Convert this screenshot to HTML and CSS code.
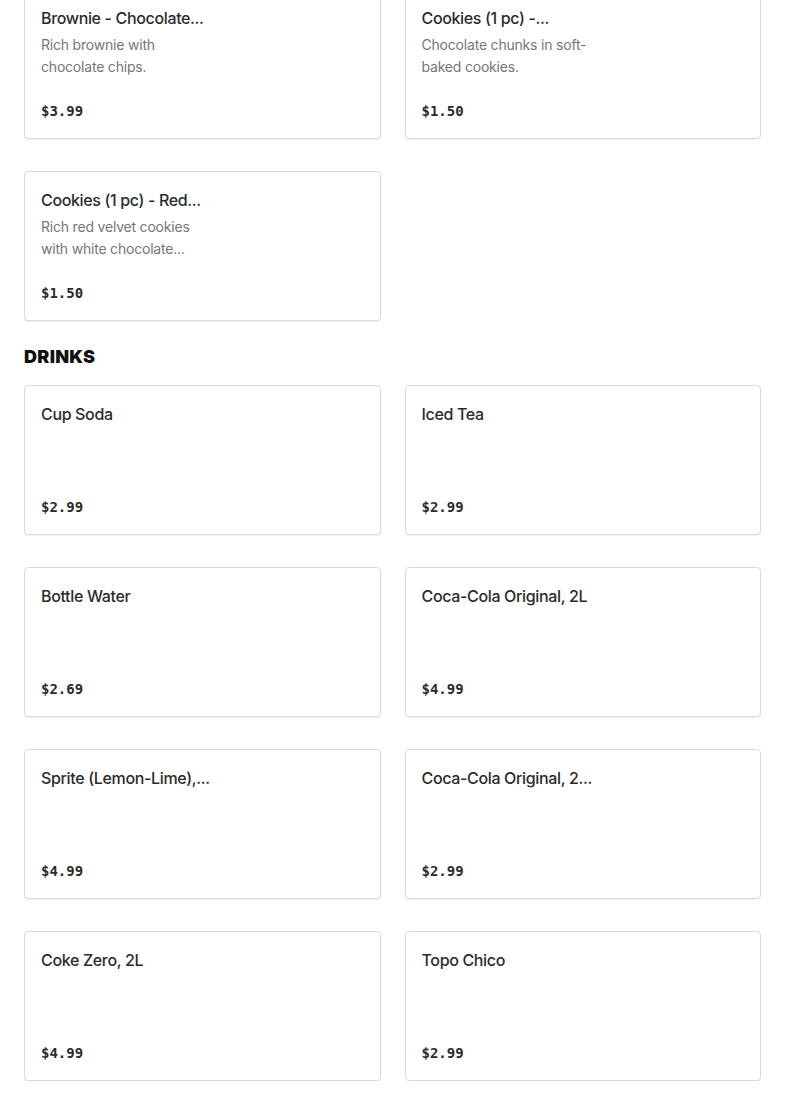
FILE: index.html
```html
<!DOCTYPE html>
<html lang="en">
<head>
<meta charset="utf-8">
<title>Menu</title>
<link rel="stylesheet" href="styles.css">
</head>
<body>
<main class="menu">
  <section class="section">
    <div class="grid">
      <article class="card">
        <div class="info">
          <h3 class="name">Brownie - Chocolate...</h3>
          <p class="desc">Rich brownie with chocolate chips.</p>
        </div>
        <div class="price">$3.99</div>
      </article>
      <article class="card">
        <div class="info">
          <h3 class="name">Cookies (1 pc) -...</h3>
          <p class="desc">Chocolate chunks in soft-baked cookies.</p>
        </div>
        <div class="price">$1.50</div>
      </article>
      <article class="card">
        <div class="info">
          <h3 class="name">Cookies (1 pc) - Red...</h3>
          <p class="desc">Rich red velvet cookies with white chocolate...</p>
        </div>
        <div class="price">$1.50</div>
      </article>
    </div>
  </section>
  <section class="section">
    <h2 class="heading">DRINKS</h2>
    <div class="grid">
      <article class="card"><div class="info"><h3 class="name">Cup Soda</h3></div><div class="price">$2.99</div></article>
      <article class="card"><div class="info"><h3 class="name">Iced Tea</h3></div><div class="price">$2.99</div></article>
      <article class="card"><div class="info"><h3 class="name">Bottle Water</h3></div><div class="price">$2.69</div></article>
      <article class="card"><div class="info"><h3 class="name">Coca-Cola Original, 2L</h3></div><div class="price">$4.99</div></article>
      <article class="card"><div class="info"><h3 class="name">Sprite (Lemon-Lime),...</h3></div><div class="price">$4.99</div></article>
      <article class="card"><div class="info"><h3 class="name">Coca-Cola Original, 2...</h3></div><div class="price">$2.99</div></article>
      <article class="card"><div class="info"><h3 class="name">Coke Zero, 2L</h3></div><div class="price">$4.99</div></article>
      <article class="card"><div class="info"><h3 class="name">Topo Chico</h3></div><div class="price">$2.99</div></article>
    </div>
  </section>
</main>
</body>
</html>
```
FILE: styles.css
```css
html, body {
  margin: 0;
  padding: 0;
  background: #ffffff;
}
body {
  font-family: Inter, "Liberation Sans", sans-serif;
  color: #2b2b2b;
}
.menu {
  padding: 0 24px;
  margin-top: -11px;
}
.section + .section {
  margin-top: 24px;
}
.heading {
  margin: 0 0 16px;
  font-size: 18px;
  line-height: 24px;
  font-weight: 900;
  color: #111111;
  letter-spacing: 0.3px;
}
.grid {
  display: grid;
  grid-template-columns: 1fr 1fr;
  column-gap: 24px;
  row-gap: 32px;
}
.card {
  box-sizing: border-box;
  height: 150px;
  border: 1px solid #dadada;
  border-radius: 4px;
  box-shadow: 0 1px 1px rgba(0, 0, 0, 0.06);
  padding: 16px;
  display: flex;
  flex-direction: column;
  justify-content: space-between;
  background: #fff;
}
.name {
  margin: 0;
  font-size: 16px;
  line-height: 24px;
  font-weight: 500;
  letter-spacing: -0.35px;
  color: #2b2b2b;
  white-space: nowrap;
}
.desc {
  margin: 4px 0 0;
  width: 170px;
  font-size: 14px;
  line-height: 22px;
  letter-spacing: -0.2px;
  color: #767676;
}
.price {
  font-family: "DejaVu Sans Mono", "Liberation Mono", monospace;
  font-weight: 700;
  font-size: 14px;
  line-height: 22px;
  color: #2b2b2b;
}
```
